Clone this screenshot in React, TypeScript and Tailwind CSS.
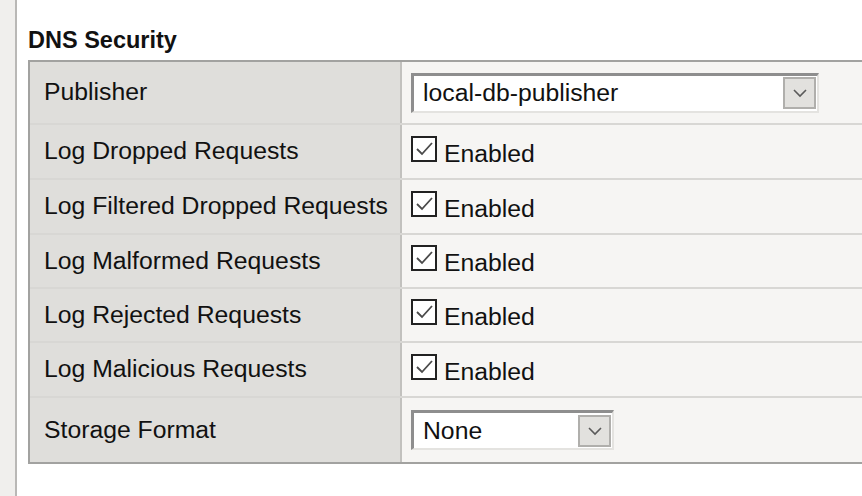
import { ReactNode } from "react";

type Row = {
  label: string;
  height: string;
  value: ReactNode;
};

function Chevron() {
  return (
    <svg width="16" height="10" viewBox="0 0 16 10" fill="none">
      <polyline points="2,2 8,8 14,2" stroke="#5a5a5a" strokeWidth="1.6" />
    </svg>
  );
}

function Select({ value, width }: { value: string; width: string }) {
  return (
    <div
      className={`${width} h-[40px] flex items-center bg-white border-l-[3px] border-t-[3px] border-r-2 border-b-2 border-l-[#8e8e8e] border-t-[#8e8e8e] border-r-[#e4e3e0] border-b-[#e4e3e0]`}
    >
      <span className="flex-1 pl-[9px] leading-[28px] text-[#111]">{value}</span>
      <div className="w-[33px] h-[32px] mr-[1px] flex items-center justify-center bg-[#e2e1de] border-2 border-[#b0afac]">
        <Chevron />
      </div>
    </div>
  );
}

function Enabled() {
  return (
    <div className="flex items-start">
      <div className="w-[26px] h-[26px] border-2 border-[#222] bg-white flex items-center justify-center">
        <svg width="20" height="16" viewBox="0 0 20 16" fill="none">
          <polyline points="3,8 8,13 18,2" stroke="#4a4a4a" strokeWidth="1.8" />
        </svg>
      </div>
      <span className="ml-[7px] mt-[4px] leading-[28px] text-[#111]">Enabled</span>
    </div>
  );
}

const rows: Row[] = [
  { label: "Publisher", height: "h-[63px]", value: <Select value="local-db-publisher" width="w-[408px]" /> },
  { label: "Log Dropped Requests", height: "h-[55px]", value: <Enabled /> },
  { label: "Log Filtered Dropped Requests", height: "h-[55px]", value: <Enabled /> },
  { label: "Log Malformed Requests", height: "h-[54px]", value: <Enabled /> },
  { label: "Log Rejected Requests", height: "h-[54px]", value: <Enabled /> },
  { label: "Log Malicious Requests", height: "h-[55px]", value: <Enabled /> },
  { label: "Storage Format", height: "h-[64px]", value: <Select value="None" width="w-[203px]" /> },
];

export default function App() {
  return (
    <div
      className="flex w-[862px] h-[496px] overflow-hidden bg-white"
      style={{ fontFamily: '"Liberation Sans", Arial, sans-serif' }}
    >
      <div className="w-[17px] shrink-0 bg-[#f0efed] border-r-2 border-[#b9b8b6]" />
      <div className="pl-[11px] pt-[27px] flex flex-col">
        <h2 className="text-[23.5px] leading-[26px] font-bold text-[#111]">DNS Security</h2>
        <div className="mt-[7px] w-[860px] border-l-2 border-t-2 border-b-2 border-[#a2a2a0] text-[24.75px]">
          {rows.map((row, i) => (
            <div
              key={row.label}
              className={`flex ${row.height} ${i < rows.length - 1 ? "border-b-2 border-[#d8d7d4]" : ""}`}
            >
              <div className="w-[372px] shrink-0 flex items-center pl-[14px] pb-[1px] bg-[#dfdedb] border-r-2 border-[#c2c1be] text-[#111] leading-[28px]">
                {row.label}
              </div>
              <div className="flex-1 flex items-center pl-[9px] bg-[#f6f5f3]">{row.value}</div>
            </div>
          ))}
        </div>
      </div>
    </div>
  );
}
